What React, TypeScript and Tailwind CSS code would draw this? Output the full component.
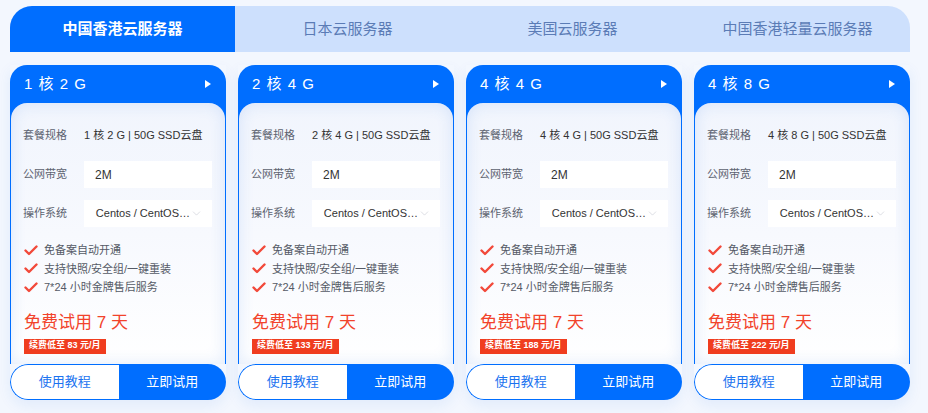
import { ChevronDown } from "lucide-react";

const tabs = ["中国香港云服务器", "日本云服务器", "美国云服务器", "中国香港轻量云服务器"];

const plans = [
  { title: "1 核 2 G", spec: "1 核 2 G | 50G SSD云盘", price: "83" },
  { title: "2 核 4 G", spec: "2 核 4 G | 50G SSD云盘", price: "133" },
  { title: "4 核 4 G", spec: "4 核 4 G | 50G SSD云盘", price: "188" },
  { title: "4 核 8 G", spec: "4 核 8 G | 50G SSD云盘", price: "222" }
];

const features = ["免备案自动开通", "支持快照/安全组/一键重装", "7*24 小时金牌售后服务"];

function Check() {
  return (
    <svg width="14" height="11" viewBox="0 0 14 11" className="shrink-0">
      <path d="M1.5 5.5 L5 9 L12.5 1.5" fill="none" stroke="#f2493a" strokeWidth="2.4" strokeLinecap="round" strokeLinejoin="round" />
    </svg>
  );
}

function PlanCard({ title, spec, price }: { title: string; spec: string; price: string }) {
  return (
    <div className="flex h-[335px] w-[216px] flex-col rounded-b-[18px] shadow-[0_6px_14px_rgba(30,100,220,0.08)]">
      <div className="flex flex-1 flex-col rounded-t-[17px] bg-[#006eff] px-px">
        <div className="flex h-[38px] items-center justify-between pl-[13px] pr-[14px]">
          <span className="text-[15px] tracking-[1px] text-white">{title}</span>
          <svg width="6" height="8" viewBox="0 0 6 8">
            <polygon points="0,0 6,4 0,8" fill="#fff" />
          </svg>
        </div>
        <div className="flex flex-1 flex-col rounded-t-[16px] bg-gradient-to-b from-[#f1f5fd] via-[#f7f9fe] to-white pl-[12px] pr-[13px] pt-[19px] shadow-[inset_0_0_16px_rgba(40,110,230,0.14)]">
          <div className="flex flex-col gap-[12px] text-[11px]">
            <div className="flex h-[27px] items-center">
              <span className="w-[61px] text-[#5d6370]">套餐规格</span>
              <span className="whitespace-nowrap text-[#333]">{spec}</span>
            </div>
            <div className="flex h-[27px] items-center">
              <span className="w-[61px] text-[#5d6370]">公网带宽</span>
              <div className="flex h-[27px] flex-1 items-center bg-white pl-[11px] text-[12px] text-[#333]">2M</div>
            </div>
            <div className="flex h-[27px] items-center">
              <span className="w-[61px] text-[#5d6370]">操作系统</span>
              <div className="flex h-[27px] flex-1 items-center justify-between bg-white pl-[12px] pr-[9px] text-[#333]">
                <span className="whitespace-nowrap">Centos / CentOS…</span>
                <ChevronDown size={13} strokeWidth={1} color="#c0c4cc" />
              </div>
            </div>
          </div>
          <ul className="mt-[14px] flex flex-col pl-px text-[11px] leading-[18.5px] text-[#555a66]">
            {features.map((f) => (
              <li key={f} className="flex items-center gap-[6px]">
                <Check />
                <span>{f}</span>
              </li>
            ))}
          </ul>
          <p className="mt-[15px] pl-px text-[17px] leading-[22px] text-[#f2432b]">免费试用 7 天</p>
          <span className="ml-px mt-[5px] flex h-[15px] w-fit items-center bg-[#f03d1f] px-[5px] text-[9px] font-bold text-white">
            续费低至 {price} 元/月
          </span>
        </div>
      </div>
      <div className="flex h-[36px] overflow-hidden rounded-[18px] text-[13px]">
        <button className="flex-1 rounded-l-[18px] border border-r-0 border-[#006eff] bg-white text-[#1a73f0]">使用教程</button>
        <button className="flex-1 bg-[#006eff] text-white">立即试用</button>
      </div>
    </div>
  );
}

export default function App() {
  return (
    <div
      className="h-[413px] w-[928px] bg-[#f3f7fe] pl-[10px] pt-[6px]"
      style={{ fontFamily: '"Liberation Sans", "Noto Sans CJK SC", sans-serif' }}
    >
      <div className="flex h-[46px] w-[900px] overflow-hidden rounded-t-[22px] bg-[#cde0fd]">
        {tabs.map((t, i) => (
          <div
            key={t}
            className={
              i === 0
                ? "flex flex-1 items-center justify-center bg-[#006eff] text-[15px] font-bold text-white"
                : "flex flex-1 items-center justify-center text-[15px] text-[#5b7cb6]"
            }
          >
            {t}
          </div>
        ))}
      </div>
      <div className="mt-[13px] flex w-[900px] gap-[12px]">
        {plans.map((p) => (
          <PlanCard key={p.title} {...p} />
        ))}
      </div>
    </div>
  );
}
